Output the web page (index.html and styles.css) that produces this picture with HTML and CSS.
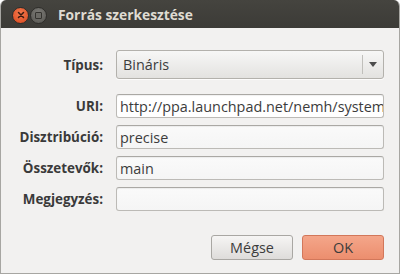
FILE: index.html
```html
<!DOCTYPE html>
<html lang="hu">
<head>
  <meta charset="UTF-8"/>
  <title>Forrás szerkesztése</title>
  <link rel="stylesheet" href="styles.css">
</head>
<body>
  <div class="window">
    <!-- title bar -->
    <div class="titlebar">
      <span class="btn-close">
        <svg width="8" height="8" viewBox="0 0 8 8"><path d="M1.5 1.5 L6.5 6.5 M6.5 1.5 L1.5 6.5" stroke="#3a1a10" stroke-width="1.5" stroke-linecap="round"/></svg>
      </span>
      <span class="btn-min">
        <span class="min-square"></span>
      </span>
      <span class="title">Forrás szerkesztése</span>
    </div>

    <!-- form -->
    <div class="content">
      <div class="form">
        <label class="lbl lbl-combo">Típus:</label>
        <div class="combo">
          <span class="combo-text">Bináris</span>
          <span class="combo-arrow">
            <svg width="8" height="5" viewBox="0 0 8 5"><path d="M0 0 H8 L4 5 Z" fill="#4c4c4c"/></svg>
          </span>
        </div>

        <label class="lbl">URI:</label>
        <div class="entry focus">http://ppa.launchpad.net/nemh/systemback/ubuntu</div>

        <label class="lbl">Disztribúció:</label>
        <div class="entry">precise</div>

        <label class="lbl">Összetevők:</label>
        <div class="entry">main</div>

        <label class="lbl">Megjegyzés:</label>
        <div class="entry"></div>
      </div>

      <div class="actions">
        <button class="button">Mégse</button>
        <button class="button ok">OK</button>
      </div>
    </div>
  </div>
</body>
</html>
```

FILE: styles.css
```css
* {
  margin: 0; padding: 0;
  box-sizing: border-box;
}

body {
  width: 400px;
  height: 274px;
  overflow: hidden;
  font-family: 'Open Sans', 'Liberation Sans', sans-serif;
  color: #3c3c3c;
  background: #fff;
}

.window {
  width: 400px;
  height: 274px;
  display: flex;
  flex-direction: column;
  background: #f2f1f0;
  border: 1px solid #a7a6a2;
  border-top: none;
  border-radius: 6px 6px 0 0;
  overflow: hidden;
}

.titlebar {
  height: 28px;
  flex: none;
  display: flex;
  align-items: center;
  background: linear-gradient(#45443f, #3c3b37);
  padding-left: 11px;
}

.btn-close, .btn-min {
  width: 17px;
  height: 17px;
  border-radius: 50%;
  display: flex;
  align-items: center;
  justify-content: center;
  margin-top: 2px;
}

.btn-close {
  background: radial-gradient(circle at 50% 35%, #f47a4e, #d9471d);
  border: 1px solid #2e2d2a;
}

.btn-min {
  margin-left: 1px;
  background: radial-gradient(circle at 50% 35%, #7d7c78, #55544f);
  border: 1px solid #2e2d2a;
}

.min-square {
  width: 7px;
  height: 7px;
  border: 1px solid #34332f;
  border-radius: 1px;
  background: #6b6a65;
}

.title {
  margin-left: 11px;
  margin-top: 1px;
  font-weight: bold;
  font-size: 13.8px;
  color: #dfdbd2;
}

.content {
  flex: 1;
  padding: 22px 15px 0 7px;
  display: flex;
  flex-direction: column;
}

.form {
  display: grid;
  grid-template-columns: 95px 1fr;
  column-gap: 13px;
  row-gap: 7px;
  align-items: center;
}

.lbl {
  text-align: right;
  font-weight: bold;
  font-size: 13.4px;
  color: #3a3a3a;
}

.lbl-combo {
  margin-bottom: 8px;
}

.combo {
  height: 29px;
  margin-bottom: 8px;
  display: flex;
  align-items: center;
  border: 1px solid #b3b1ac;
  border-radius: 3px;
  background: linear-gradient(#f7f7f6, #e3e2e0);
  box-shadow: 0 1px 0 rgba(255, 255, 255, 0.8);
}

.combo-text {
  flex: 1;
  padding-left: 6px;
  font-size: 14.4px;
}

.combo-arrow {
  width: 21px;
  height: 19px;
  border-left: 1px solid #c0bfbb;
  display: flex;
  align-items: center;
  justify-content: center;
}

.entry {
  height: 24px;
  padding: 0 3px;
  display: flex;
  align-items: center;
  font-size: 14.4px;
  white-space: nowrap;
  overflow: hidden;
  border: 1px solid #bcbab6;
  border-top-color: #aaa8a4;
  border-radius: 3px;
  background: linear-gradient(#fafafa, #f5f5f5);
  box-shadow: inset 0 1px 1px rgba(0, 0, 0, 0.06);
}

.entry.focus {
  background: #fff;
}

.actions {
  display: flex;
  justify-content: flex-end;
  gap: 9px;
  margin-top: 24px;
}

.button {
  width: 82px;
  height: 25px;
  font-family: inherit;
  font-size: 14.4px;
  color: #3c3c3c;
  border: 1px solid #a9a7a3;
  border-radius: 3px;
  background: linear-gradient(#f6f5f4, #dedcda);
}

.button.ok {
  border-color: #d2775a;
  background: linear-gradient(#f4a68a, #ec8e6e);
}
```
